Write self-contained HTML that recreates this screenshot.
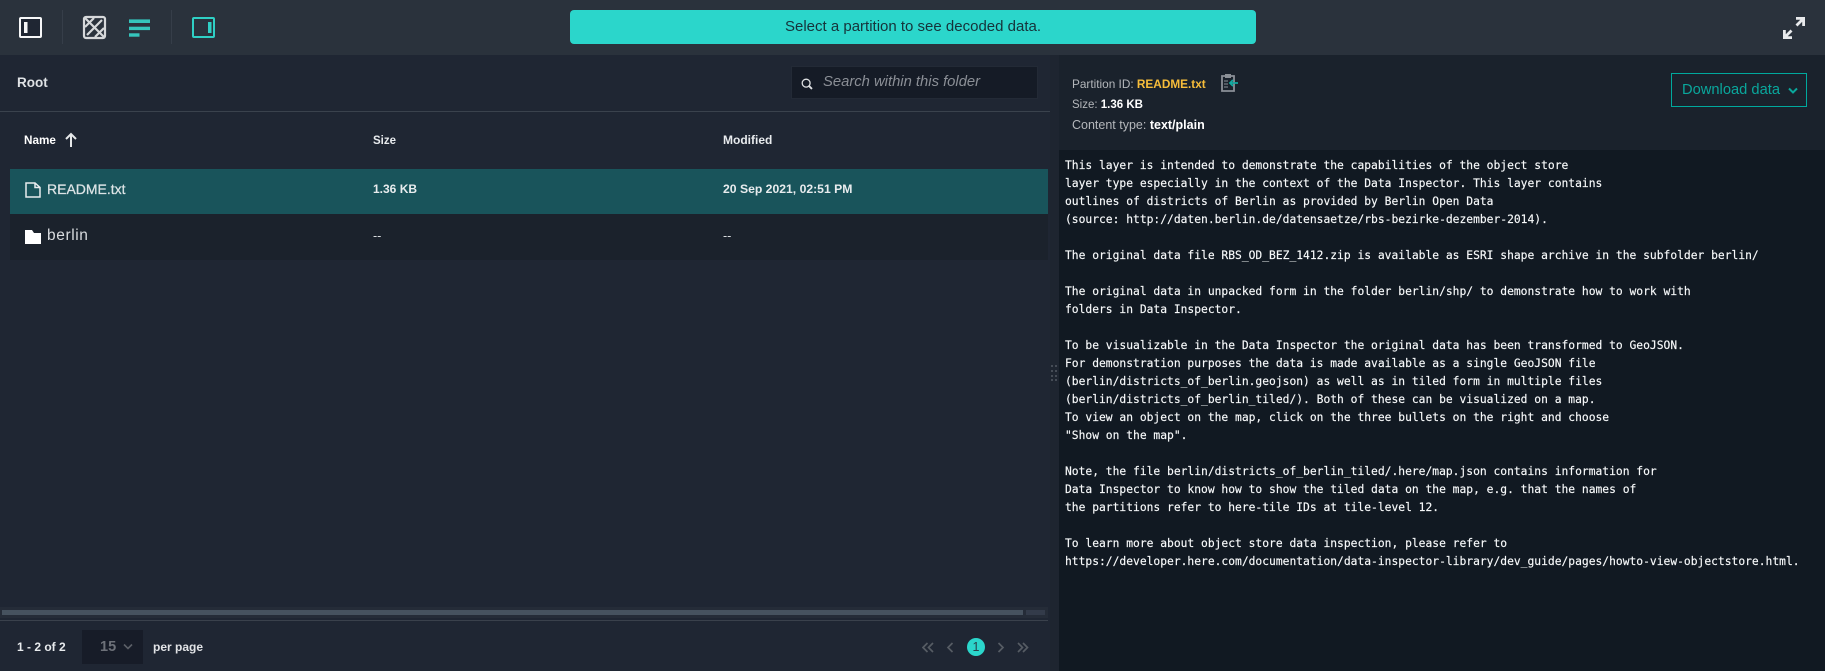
<!DOCTYPE html>
<html><head><meta charset="utf-8"><style>
html,body{margin:0;padding:0;width:1825px;height:671px;overflow:hidden;background:#1f2633;font-family:"Liberation Sans",sans-serif;color:#e8ebee}
div,span,svg{position:absolute}
.t{white-space:nowrap;line-height:16px}
pre{position:absolute;margin:0;left:1065px;top:157px;font:11.3px/18px "DejaVu Sans Mono",monospace;color:#f8fafb;-webkit-text-stroke:.15px #f8fafb}
b{font-weight:700}
</style></head><body>
<div style="left:0;top:0;width:1825px;height:55px;background:#2a323c"></div>
<div style="left:62px;top:10px;width:1px;height:34px;background:#363e49"></div>
<div style="left:171px;top:10px;width:1px;height:34px;background:#363e49"></div>
<svg style="left:18px;top:16px" width="26" height="23" viewBox="0 0 26 23"><rect x="2" y="2" width="21" height="19" rx="1" fill="#1f2633" stroke="#f6f7f8" stroke-width="2"/><rect x="6" y="6" width="3.5" height="11" fill="#f6f7f8"/></svg>
<svg style="left:82px;top:15px" width="25" height="25" viewBox="0 0 25 25" fill="none" stroke="#d6d8da" stroke-width="2.2"><rect x="2" y="2" width="21" height="21" rx="2"/><path d="M3 3L22 22M3 12L12 3M5 20L20 5M13 22L22 13"/></svg>
<svg style="left:129px;top:19px" width="22" height="18"><rect width="21" height="3.6" y="0.4" fill="#35c5bc"/><rect width="21" height="3.4" y="7.7" fill="#35c5bc"/><rect width="10.5" height="3.4" y="14.3" fill="#35c5bc"/></svg>
<svg style="left:191px;top:16px" width="26" height="23" viewBox="0 0 26 23"><rect x="2" y="2" width="21" height="19" rx="1" fill="none" stroke="#2fd0c5" stroke-width="2"/><rect x="17" y="6" width="3.5" height="11" fill="#2fd0c5"/></svg>
<div style="left:570px;top:10px;width:686px;height:34px;background:#2bd6cb;border-radius:4px"></div>
<div class="t" style="left:570px;top:19px;width:686px;text-align:center;font-size:15px;color:#16333a">Select a partition to see decoded data.</div>
<svg style="left:1782px;top:16px" width="24" height="24" viewBox="0 0 24 24" fill="none" stroke="#e8eaec" stroke-width="2.8"><path d="M14 2.4H21.6V10M21 3L14.5 9.5M2.4 14V21.6H10M3 21L9.5 14.5"/></svg>

<div style="left:0;top:55px;width:1050px;height:616px;background:#1f2633"></div>
<div class="t" style="left:17px;top:75px;font-size:13.5px;font-weight:700;color:#dfe2e5">Root</div>
<div style="left:791px;top:66px;width:247px;height:33px;background:#151b26;border:1px solid #232a36;box-sizing:border-box"></div>
<svg style="left:801px;top:78px" width="12" height="12" viewBox="0 0 14 14" fill="none" stroke="#e0e2e4" stroke-width="1.5"><circle cx="6" cy="6" r="4.6"/><path d="M9 9L12.8 12.8" stroke-width="2.2"/></svg>
<div class="t" style="left:823px;top:74px;font-size:14.8px;font-style:italic;color:#8b8f96">Search within this folder</div>
<div style="left:0;top:111px;width:1050px;height:1px;background:#3a424d"></div>
<div class="t" style="left:24px;top:132.5px;font-size:11.7px;font-weight:700;color:#fff">Name</div>
<svg style="left:64px;top:132px" width="14" height="16" viewBox="0 0 14 16" fill="none" stroke="#e6e8ea" stroke-width="2"><path d="M7 15V2M2 7L7 2L12 7"/></svg>
<div class="t" style="left:373px;top:132.5px;font-size:11.5px;font-weight:700;color:#e8ebee">Size</div>
<div class="t" style="left:723px;top:132px;font-size:12px;font-weight:700;color:#e8ebee">Modified</div>
<div style="left:10px;top:169px;width:1038px;height:45px;background:#19545b"></div>
<div style="left:10px;top:214px;width:1038px;height:46px;background:#1b222c"></div>
<svg style="left:25px;top:182px" width="16" height="16" viewBox="0 0 16 16" fill="none" stroke="#e8ebee" stroke-width="1.5"><path d="M1 1H10L15 5.5V15H1ZM10 1V5.5H15"/></svg>
<div class="t" style="left:47px;top:181px;font-size:14px;color:#dde4e6;-webkit-text-stroke:.25px #dde4e6">README.txt</div>
<svg style="left:25px;top:229px" width="16" height="16" viewBox="0 0 16 16"><path d="M0 1H7L9 4H16V15H0Z" fill="#fff"/></svg>
<div class="t" style="left:47px;top:228px;font-size:15.5px;letter-spacing:.6px;color:#d9dcdf">berlin</div>
<div class="t" style="left:373px;top:181px;font-size:12px;font-weight:700;color:#e8ecee">1.36 KB</div>
<div class="t" style="left:723px;top:181px;font-size:12.2px;font-weight:700;color:#e8ecee">20 Sep 2021, 02:51 PM</div>
<div class="t" style="left:373px;top:228px;font-size:12.5px;color:#d9dcdf">--</div>
<div class="t" style="left:723px;top:228px;font-size:12.5px;color:#d9dcdf">--</div>
<div style="left:0;top:607px;width:1048px;height:11px;background:#252c38"></div>
<div style="left:2px;top:610px;width:1021px;height:5px;background:#46525f"></div>
<div style="left:1026px;top:610px;width:19px;height:5px;background:#333b4a"></div>
<div style="left:0;top:620px;width:1048px;height:1px;background:#3a414c"></div>
<div class="t" style="left:17px;top:639px;font-size:12px;font-weight:700;color:#e8ebee">1 - 2 of 2</div>
<div style="left:82px;top:630px;width:61px;height:34px;background:#171c28"></div>
<div class="t" style="left:100px;top:639px;font-size:14.5px;font-weight:700;color:#6d7179">15</div>
<svg style="left:123px;top:643px" width="10" height="8" fill="none" stroke="#5b5f67" stroke-width="1.6"><path d="M1 1.5L5 5.5L9 1.5"/></svg>
<div class="t" style="left:153px;top:639px;font-size:12px;font-weight:700;color:#e1e3e6">per page</div>
<svg style="left:922px;top:640px" width="110" height="14" fill="none" stroke="#565c64" stroke-width="1.7"><path d="M5.5 3L1 7.5L5.5 12M11 3L6.5 7.5L11 12M30.5 3L26 7.5L30.5 12M76.5 3L81 7.5L76.5 12M96 3L100.5 7.5L96 12M101 3L105.5 7.5L101 12"/></svg>
<div style="left:967px;top:638px;width:18px;height:18px;border-radius:50%;background:#2bd6cb"></div>
<div class="t" style="left:967px;top:639px;width:18px;text-align:center;font-size:12.5px;color:#27414a">1</div>

<div style="left:1050px;top:55px;width:775px;height:616px;background:#1a222c"></div>
<div style="left:1050px;top:55px;width:9px;height:616px;background:#1e2530"></div>
<svg style="left:1050px;top:364px" width="9" height="18" fill="#454c56"><rect x="1" y="1" width="2" height="2"/><rect x="5" y="1" width="2" height="2"/><rect x="1" y="6" width="2" height="2"/><rect x="5" y="6" width="2" height="2"/><rect x="1" y="11" width="2" height="2"/><rect x="5" y="11" width="2" height="2"/><rect x="1" y="15" width="2" height="2"/><rect x="5" y="15" width="2" height="2"/></svg>
<div class="t" style="left:1072px;top:76px;font-size:11.8px;color:#b4b7bb">Partition ID: <b style="color:#f7bd3a">README.txt</b></div>
<svg style="left:1221px;top:73px" width="18" height="20" viewBox="0 0 18 20" fill="none"><path d="M1 3H13V18H1Z" stroke="#8b9097" stroke-width="1.8"/><rect x="4" y="1" width="6" height="4" fill="#8b9097"/><path d="M3 8H7M3 11H7M3 14H7" stroke="#8b9097"/><path d="M17 10H9M12 7L9 10L12 13" stroke="#14a9a0" stroke-width="1.8"/></svg>
<div class="t" style="left:1072px;top:97px;font-size:11.5px;color:#b4b7bb">Size: <b style="color:#fff">1.36 KB</b></div>
<div class="t" style="left:1072px;top:117px;font-size:12.5px;color:#b4b7bb">Content type: <b style="color:#fff">text/plain</b></div>
<div style="left:1671px;top:73px;width:136px;height:34px;border:1px solid #00a99d;box-sizing:border-box"></div>
<div class="t" style="left:1682px;top:82px;font-size:14.7px;color:#0aa79c">Download data</div>
<svg style="left:1788px;top:87px" width="10" height="8" fill="none" stroke="#0aa79c" stroke-width="2"><path d="M1 1.5L5 5.5L9 1.5"/></svg>
<div style="left:1059px;top:150px;width:766px;height:521px;background:#111922"></div>
<pre>This layer is intended to demonstrate the capabilities of the object store
layer type especially in the context of the Data Inspector. This layer contains
outlines of districts of Berlin as provided by Berlin Open Data
(source: http://daten.berlin.de/datensaetze/rbs-bezirke-dezember-2014).

The original data file RBS_OD_BEZ_1412.zip is available as ESRI shape archive in the subfolder berlin/

The original data in unpacked form in the folder berlin/shp/ to demonstrate how to work with
folders in Data Inspector.

To be visualizable in the Data Inspector the original data has been transformed to GeoJSON.
For demonstration purposes the data is made available as a single GeoJSON file
(berlin/districts_of_berlin.geojson) as well as in tiled form in multiple files
(berlin/districts_of_berlin_tiled/). Both of these can be visualized on a map.
To view an object on the map, click on the three bullets on the right and choose
"Show on the map".

Note, the file berlin/districts_of_berlin_tiled/.here/map.json contains information for
Data Inspector to know how to show the tiled data on the map, e.g. that the names of
the partitions refer to here-tile IDs at tile-level 12.

To learn more about object store data inspection, please refer to
https://developer.here.com/documentation/data-inspector-library/dev_guide/pages/howto-view-objectstore.html.</pre>
</body></html>
